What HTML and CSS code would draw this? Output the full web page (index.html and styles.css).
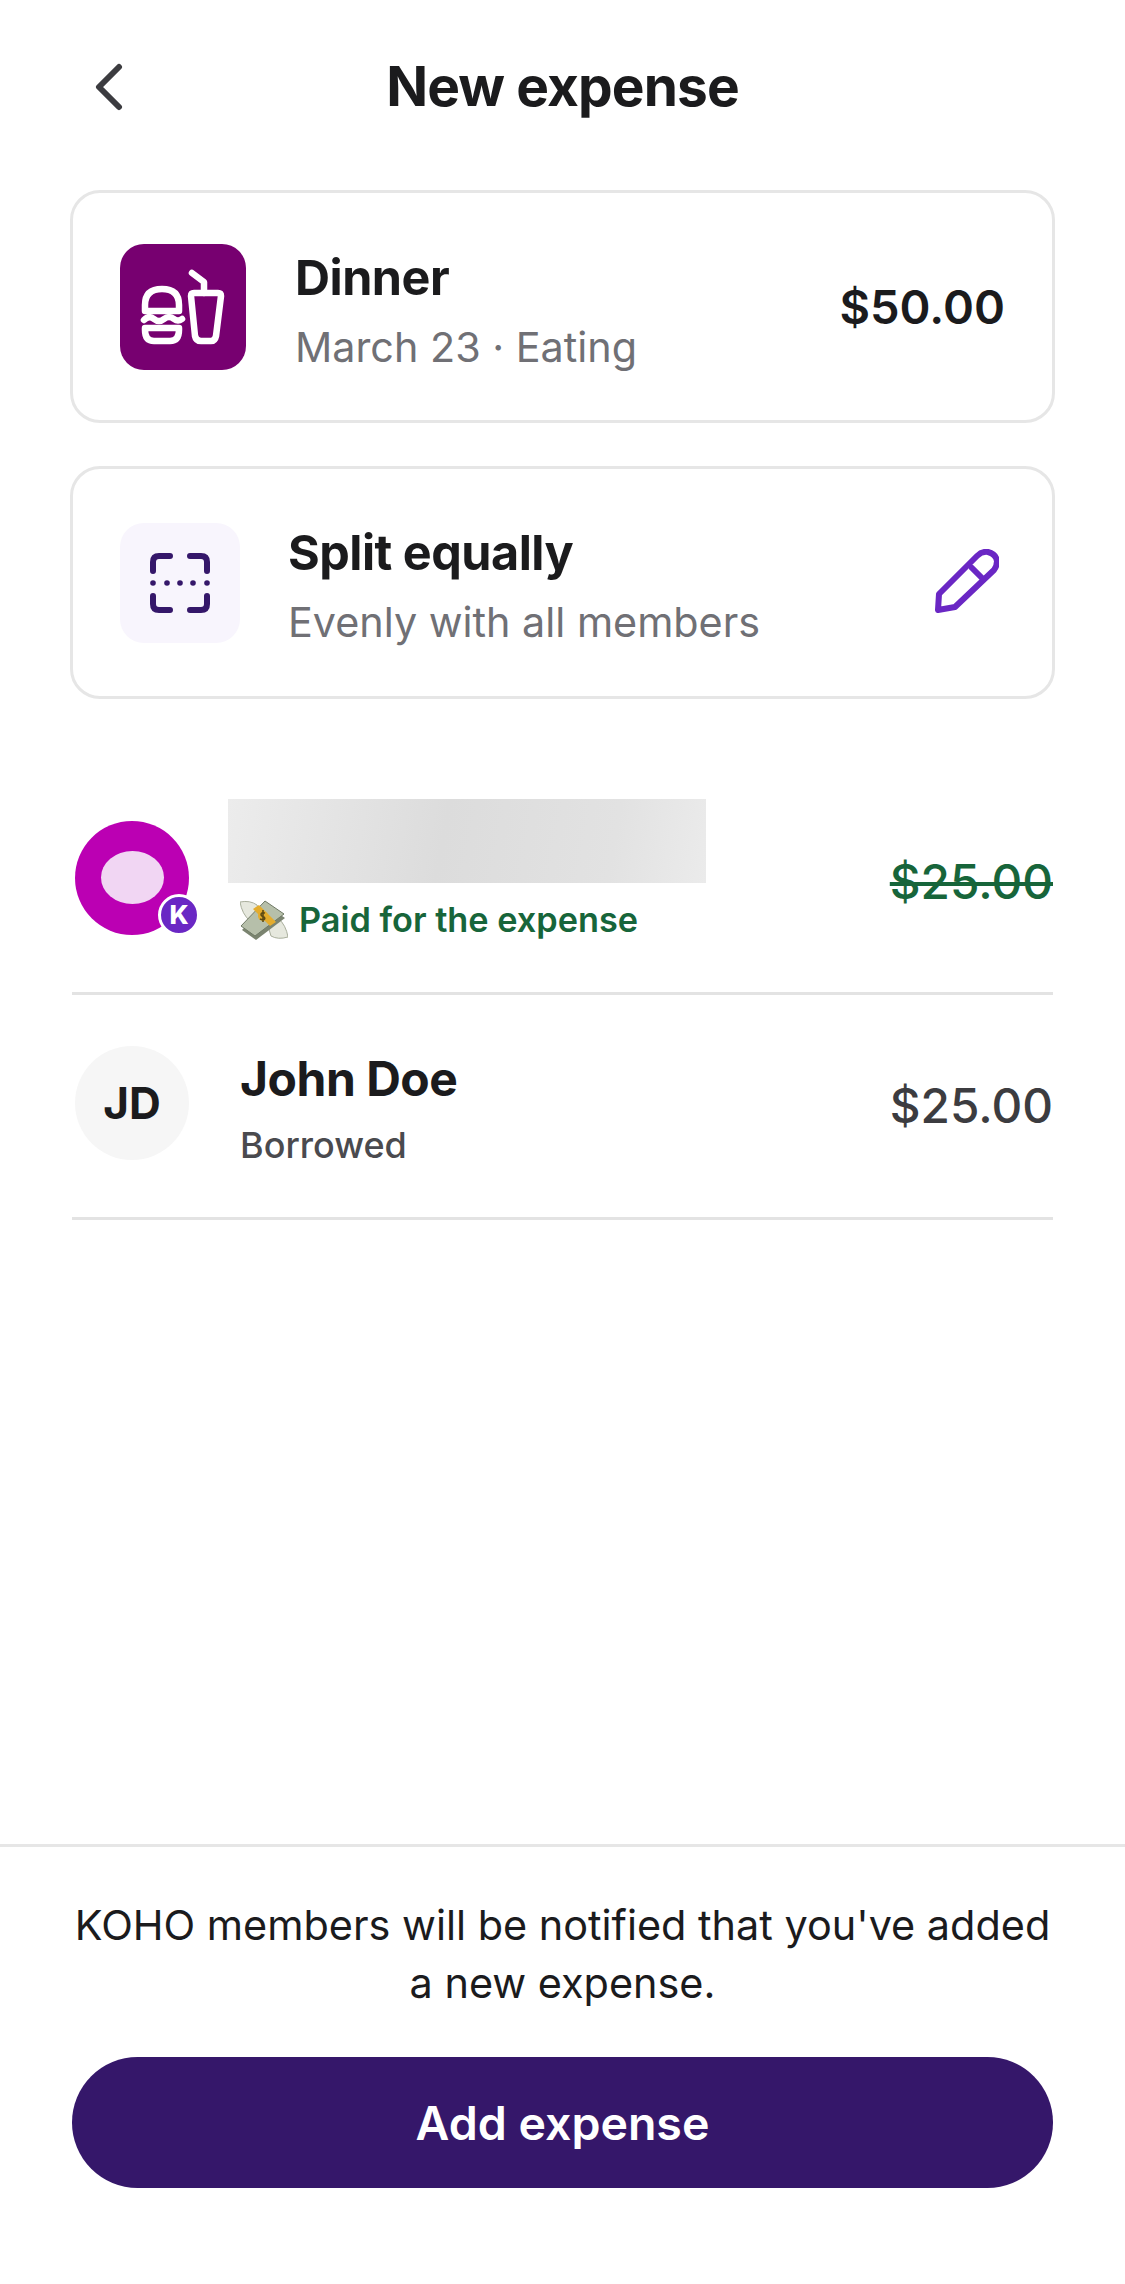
FILE: index.html
```html
<html>
	<head>
		<title>New expense</title>
		<link rel="stylesheet" href="styles.css">
	</head>
	<body>
		<div class="topbar">
			<svg class="back" viewBox="0 0 30 48"><path d="M25 4 L5 24 L25 44"/></svg>
			<div class="pagetitle">New expense</div>
		</div>

		<div class="card">
			<div class="catbox">
				<svg viewBox="0 0 126 126" class="caticon">
					<path d="M25 67 V61 Q25 45 42 45 Q59 45 59 61 V67 Z"/>
					<path d="M24 76 Q29 71 34 75 Q39 79 44 75 Q49 71 54 75 Q58 78 62 75"/>
					<path d="M25 84 H59 V86 Q59 97 50 97 H34 Q25 97 25 86 Z"/>
					<path d="M72 29 L84 38 V49"/>
					<path d="M71 52 Q71 49 74 49 H98 Q101 49 101 52 L96 92 Q95 97 91 97 H81 Q76 97 75 92 Z"/>
				</svg>
			</div>
			<div class="cardtext">
				<div class="cardname">Dinner</div>
				<div class="cardsub">March 23 · Eating</div>
			</div>
			<div class="cardamount">$50.00</div>
		</div>

		<div class="card">
			<div class="splitbox">
				<svg viewBox="0 0 120 120" class="spliticon">
					<path d="M50 33 H39 Q33 33 33 39 V48"/>
					<path d="M70 33 H81 Q87 33 87 39 V48"/>
					<path d="M33 73 V81 Q33 87 39 87 H50"/>
					<path d="M87 73 V81 Q87 87 81 87 H70"/>
					<circle cx="33" cy="60" r="2.8"/>
					<circle cx="47" cy="60" r="2.8"/>
					<circle cx="60" cy="60" r="2.8"/>
					<circle cx="73" cy="60" r="2.8"/>
					<circle cx="87" cy="60" r="2.8"/>
				</svg>
			</div>
			<div class="cardtext">
				<div class="cardname">Split equally</div>
				<div class="cardsub">Evenly with all members</div>
			</div>
			<svg viewBox="0 0 64 64" class="pencil">
				<path d="M3 61 L4 45 L42 7 Q47 2 53 3 Q61 5 62 12 Q62 17 59 21 L20 58 Z"/>
				<path d="M37 19 L48 30"/>
			</svg>
		</div>

		<div class="members">
			<div class="member">
				<div class="avatar logo">
					<div class="logohole"></div>
					<div class="badge">K</div>
				</div>
				<div class="memberinfo">
					<div class="blurname"></div>
					<div class="paidline">
						<svg viewBox="0 0 48 42" class="money">
							<path class="wing" d="M0 4 Q10 2 17 7 L20 14 L10 23 Q2 16 0 4 Z"/>
							<path class="wing" d="M48 39 Q38 42 31 38 L28 28 L38 20 Q46 27 48 39 Z"/>
							<path class="bill" d="M2 32 L26 7 L45 20 L16 42 Z"/>
							<path class="billtop" d="M1 28 L25 3 L44 16 L15 38 Z"/>
							<path class="strap" d="M13 11 L19 7 L36 24 L30 28 Z"/>
							<circle class="coin" cx="23" cy="18" r="5"/>
							<path class="dollar" d="M25 15 Q21 14 21 17 Q22 19 24 19 Q26 21 23 22 L20 21 M23 12 V24"/>
						</svg>
						<span>Paid for the expense</span>
					</div>
				</div>
				<div class="paidamount">$25.00</div>
			</div>
			<div class="member plain">
				<div class="avatar initials">JD</div>
				<div class="memberinfo">
					<div class="membername">John Doe</div>
					<div class="memberstate">Borrowed</div>
				</div>
				<div class="memberamount">$25.00</div>
			</div>
		</div>

		<div class="footer">
			<div class="notice">KOHO members will be notified that you've added a new expense.</div>
			<div class="addbutton">Add expense</div>
		</div>
	</body>
</html>
```

FILE: styles.css
```css
html, body{
	height: 100%;
}
body{
	margin: 0;
	font-family: Inter, "Liberation Sans", sans-serif;
	color: #1b1b1d;
	background: #ffffff;
	display: flex;
	flex-direction: column;
}

.topbar{
	display: flex;
	align-items: center;
	justify-content: center;
	position: relative;
	height: 60px;
	margin-top: 56px;
	margin-bottom: 74px;
}
.back{
	position: absolute;
	left: 94px;
	top: 7px;
	width: 30px;
	height: 48px;
	fill: none;
	stroke: #3c3c40;
	stroke-width: 6;
	stroke-linecap: round;
	stroke-linejoin: round;
}
.pagetitle{
	font-size: 55px;
	font-weight: 700;
	letter-spacing: -0.9px;
}

.card{
	display: flex;
	align-items: center;
	box-sizing: border-box;
	height: 233px;
	margin: 0 70px 43px;
	padding: 0 47px;
	border: 3px solid #e6e6e6;
	border-radius: 30px;
}
.catbox{
	width: 126px;
	height: 126px;
	border-radius: 24px;
	background: #770070;
	flex: none;
}
.caticon{
	display: block;
	width: 126px;
	height: 126px;
	fill: none;
	stroke: #ffffff;
	stroke-width: 6.5;
	stroke-linecap: round;
	stroke-linejoin: round;
}
.splitbox{
	width: 120px;
	height: 120px;
	border-radius: 24px;
	background: #f8f5fd;
	flex: none;
}
.spliticon{
	display: block;
	width: 120px;
	height: 120px;
	fill: none;
	stroke: #35176a;
	stroke-width: 6;
	stroke-linecap: round;
}
.spliticon circle{
	fill: #35176a;
	stroke: none;
}
.cardtext{
	flex: 1;
	margin-left: 49px;
	padding-top: 12px;
}
.splitbox + .cardtext{
	margin-left: 48px;
	padding-top: 10px;
}
.cardname{
	font-size: 48.5px;
	font-weight: 700;
	letter-spacing: -0.5px;
	line-height: 68px;
}
.cardsub{
	font-size: 41.3px;
	color: #707075;
	line-height: 70px;
}
.cardamount{
	font-size: 47px;
	font-weight: 600;
}
.pencil{
	width: 64px;
	height: 64px;
	margin-right: 6px;
	margin-bottom: 3px;
	fill: none;
	stroke: #6a27c4;
	stroke-width: 6;
	stroke-linejoin: round;
	stroke-linecap: round;
}

.members{
	margin: 29px 72px 0;
}
.member{
	display: flex;
	align-items: center;
	height: 224px;
	box-sizing: border-box;
	border-bottom: 3px solid #e3e3e3;
}
.member.plain{
	height: 225px;
}
.avatar{
	position: relative;
	flex: none;
	width: 114px;
	height: 114px;
	margin-left: 3px;
	border-radius: 50%;
	display: flex;
	align-items: center;
	justify-content: center;
}
.logo{
	background: #bb00b3;
	margin-bottom: 8px;
}
.logohole{
	width: 63px;
	height: 53px;
	border-radius: 50%;
	background: #f1d6f3;
}
.badge{
	position: absolute;
	right: -11px;
	bottom: -1px;
	box-sizing: border-box;
	width: 42px;
	height: 42px;
	border: 3px solid #ffffff;
	border-radius: 50%;
	background: #6a27c4;
	color: #ffffff;
	font-size: 26px;
	font-weight: 800;
	line-height: 36px;
	text-align: center;
}
.initials{
	background: #f6f6f6;
	font-size: 44px;
	font-weight: 700;
	margin-bottom: 6px;
}
.memberinfo{
	flex: 1;
	margin-left: 51px;
	padding-top: 11px;
}
.member:first-child .memberinfo{
	margin-left: 39px;
	padding-top: 0;
	margin-bottom: 24px;
}
.blurname{
	width: 478px;
	height: 84px;
	background: linear-gradient(100deg, #ececec, #dcdcdc 45%, #e2e2e2 80%, #ebebeb);
}
.paidline{
	display: flex;
	align-items: center;
	margin: 15px 0 0 12px;
	font-size: 34.3px;
	font-weight: 600;
	color: #17653a;
}
.money{
	width: 48px;
	height: 42px;
	margin-right: 11px;
}
.wing{
	fill: #e6e8de;
	stroke: #a9ae9c;
	stroke-width: 1;
}
.bill{
	fill: #7b8470;
}
.billtop{
	fill: #b6bfaa;
	stroke: #6f7965;
	stroke-width: 1;
}
.strap{
	fill: #e3ac2e;
}
.coin{
	fill: #e3ac2e;
}
.dollar{
	fill: none;
	stroke: #5d4a14;
	stroke-width: 1.6;
}
.paidamount, .memberamount{
	font-size: 47.7px;
	font-weight: 500;
}
.paidamount{
	color: #17653a;
	text-decoration: line-through;
	text-decoration-thickness: 4px;
}
.memberamount{
	color: #3c3c40;
}
.membername{
	font-size: 48px;
	font-weight: 700;
	letter-spacing: -0.5px;
	line-height: 66px;
}
.memberstate{
	font-size: 36px;
	font-weight: 500;
	color: #4a4a4e;
	line-height: 66px;
}

.footer{
	margin-top: auto;
	border-top: 3px solid #e6e6e6;
	padding: 49px 72px 96px;
}
.notice{
	font-size: 41.4px;
	line-height: 58px;
	text-align: center;
	margin-bottom: 45px;
}
.addbutton{
	height: 131px;
	border-radius: 66px;
	background: #35176a;
	color: #ffffff;
	font-size: 46.5px;
	font-weight: 600;
	display: flex;
	align-items: center;
	justify-content: center;
}
```
